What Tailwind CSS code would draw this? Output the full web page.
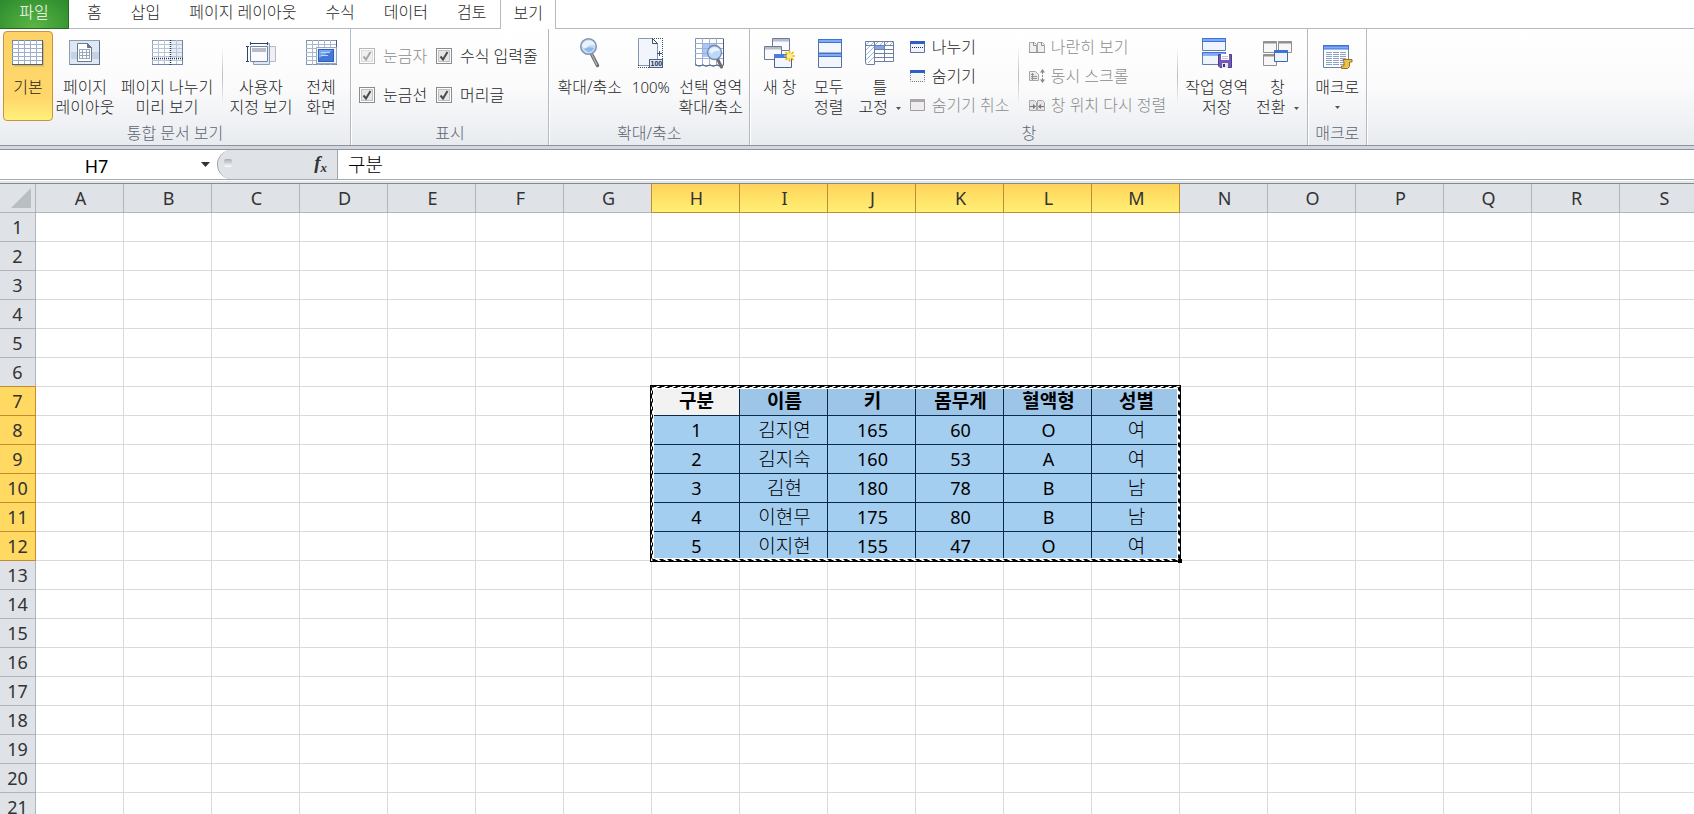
<!DOCTYPE html>
<html lang="ko">
<head>
    <meta charset="UTF-8">
    <meta name="viewport" content="width=device-width, initial-scale=1.0">
    <title>통합 문서</title>
    <script src="https://cdn.jsdelivr.net/npm/@tailwindcss/browser@4"></script>
</head>
<body class="h-screen overflow-hidden flex flex-col bg-white text-base text-[#1f1f1f] font-light font-[family-name:'Noto_Sans','Noto_Sans_CJK_KR',sans-serif]">

    <!-- Ribbon tabs -->
    <nav class="flex shrink-0 h-[29px] leading-6 whitespace-nowrap">
        <button class="w-[69px] pb-1 text-white border-b border-r border-[#1f6b22] bg-radial-[at_50%_100%] from-[#5cb646] to-[#2b8a2c]">파일</button>
        <div class="w-[3px] border-b border-[#b6babf]"></div>
        <button class="pl-[15px] pr-3.5 pb-1 border-b border-[#b6babf]">홈</button>
        <button class="pl-[15px] pr-3.5 pb-1 border-b border-[#b6babf]">삽입</button>
        <button class="pl-[15px] pr-3.5 pb-1 border-b border-[#b6babf]">페이지 레이아웃</button>
        <button class="pl-[15px] pr-3.5 pb-1 border-b border-[#b6babf]">수식</button>
        <button class="pl-[15px] pr-3.5 pb-1 border-b border-[#b6babf]">데이터</button>
        <button class="pl-[15px] pr-3.5 pb-1 border-b border-[#b6babf]">검토</button>
        <button class="px-3 pb-1 border-x border-[#b6babf]">보기</button>
        <div class="flex-1 border-b border-[#b6babf]"></div>
    </nav>

    <!-- Ribbon -->
    <div class="flex shrink-0 h-[116px] leading-5 whitespace-nowrap bg-linear-to-b from-white via-[#fbfbfc] to-[#e8ebef]">

        <section class="flex flex-col pt-0.5 border-r border-[#b4b8c0]">
            <div class="flex h-[90px] px-[3px]">
                <button class="flex flex-col items-center w-[50px] pt-[5px] border border-[#c39543] rounded-sm bg-linear-to-b from-[#fdd367] via-[#ffd76b] via-75% to-[#fff07c]">
                    <svg class="w-8 h-8 mb-2" viewBox="0 0 32 32">
                        <rect x="1.5" y="4.500" width="31" height="25" fill="#00000022"/>
                        <rect x="0.500" y="3.500" width="30" height="24" fill="#fff" stroke="#6f86ab"/>
                        <path d="M0 7.500H31M0 11.500H31M0 15.500H31M0 19.500H31M0 23.500H31M6.500 3V28M12.500 3V28M18.500 3V28M24.500 3V28" stroke="#9dafc9" fill="none"/>
                        <path d="M30.500 3V27.500H0" stroke="#4b5f7e" fill="none"/>
                    </svg>
                    기본
                </button>
                <button class="flex flex-col items-center w-16 pt-1.5">
                    <svg class="w-8 h-8 mb-2" viewBox="0 0 32 32">
                        <rect x="0.500" y="3.500" width="30" height="24" fill="#dfe7f3" stroke="#8b9db8"/>
                        <path d="M2 15H30V22H2z" fill="#c3d2e4"/>
                        <path d="M30.500 4V27.500H1" stroke="#5c7190" fill="none"/>
                        <path d="M8.500 6.500H18.500L22.500 10.500V24.500H8.500z" fill="#fff" stroke="#6b7b93"/>
                        <path d="M18.500 6.500V10.500H22.500z" fill="#65758d" stroke="#65758d"/>
                        <path d="M10 12.500H21M10 15.500H21M10 18.500H21M10 21.500H21M10.500 12V22M13.500 12V22M17.500 12V22M20.500 12V22" stroke="#9aa7ba" fill="none"/>
                    </svg>
                    <span>페이지<br>레이아웃</span>
                </button>
                <button class="flex flex-col items-center w-[100px] pt-1.5">
                    <svg class="w-8 h-8 mb-2" viewBox="0 0 32 32">
                        <rect x="1.500" y="3.500" width="30" height="24" fill="#fff" stroke="#8fa1bb"/>
                        <path d="M20 4H31V21H20z" fill="#e6ecf6"/>
                        <path d="M1 7.500H32M1 11.500H32M1 15.500H32M1 19.500H32M1 23.500H32M7.500 3V28M13.500 3V28M25.500 3V28" stroke="#bac6d8" fill="none"/>
                        <path d="M31.500 3V27.500H1" stroke="#7085a5" fill="none"/>
                        <path d="M19.500 3V28M1 21.500H32" stroke="#20395e" stroke-dasharray="1 1" stroke-width="1.500" fill="none"/>
                    </svg>
                    <span>페이지 나누기<br>미리 보기</span>
                </button>
                <div class="w-[10px] flex justify-center py-4"><div class="w-px bg-linear-to-b from-transparent via-[#b9bcc2] to-transparent"></div></div>
                <button class="flex flex-col items-center w-[68px] pt-1.5">
                    <svg class="w-8 h-8 mb-2" viewBox="0 0 32 32">
                        <path d="M24 9.500H30.500V24.500H22" fill="#f1eef5" stroke="#b9b7c4"/>
                        <path d="M8.500 24V27.500H24.500V6.500H22" fill="#e2e8f1" stroke="#8c9db5"/>
                        <path d="M5.500 9.500H22.500V24.500H5.500z" fill="#fafbff" stroke="#6d82a5"/>
                        <path d="M7 11H21V15H7z" fill="#b9bcc4"/>
                        <path d="M5 6.500H23M5.500 5V8M22.500 5V8M2.500 9V25M1 9.500H4M1 24.500H4" stroke="#2e4565" fill="none"/>
                    </svg>
                    <span>사용자<br>지정 보기</span>
                </button>
                <button class="flex flex-col items-center w-[52px] pt-1.5">
                    <svg class="w-8 h-8 mb-2" viewBox="0 0 32 32">
                        <rect x="1.500" y="3.500" width="30" height="24" fill="#fff" stroke="#8394ae"/>
                        <path d="M1 7.500H32M1 11.500H32M1 15.500H32M1 19.500H32M1 23.500H32M7.500 3V28M13.500 3V28M19.500 3V28M25.500 3V28" stroke="#a9b8cd" fill="none"/>
                        <path d="M31.500 3V27.500" stroke="#4a5e7d" fill="none"/>
                        <rect x="11.500" y="10.500" width="20" height="16" fill="#eef3fd" stroke="#95a8c8"/>
                        <rect x="13.500" y="12.500" width="15" height="12" fill="#4478d8" stroke="#2e5fb8"/>
                        <path d="M14 13H28L14 21z" fill="#7ba5ee"/>
                        <path d="M16 15.500H25M16 18.500H23" stroke="#bdd3fa"/>
                    </svg>
                    <span>전체<br>화면</span>
                </button>
            </div>
            <h2 class="h-6 leading-6 text-center text-[#5b6373]">통합 문서 보기</h2>
        </section>

        <section class="flex flex-col pt-0.5 border-l border-l-white border-r border-r-[#b4b8c0]">
            <div class="grid grid-cols-[77px_auto] content-start h-[90px] pt-[5px] pl-[7px] pr-[10px]">
                <label class="flex items-center gap-2 h-[39px] text-[#8c8c8c]">
                    <span class="grid w-4 h-4">
                        <input type="checkbox" checked disabled class="[grid-area:1/1] appearance-none w-4 h-4 bg-[#f0f0f0] border border-[#b8b8b8] shadow-[inset_0_0_0_1px_#fff,inset_0_0_0_2px_#dcdcdc]">
                        <svg class="[grid-area:1/1] w-4 h-4 pointer-events-none" viewBox="0 0 16 16"><path d="M4.500 8.500L7 11.500L11.500 4" fill="none" stroke="#a6a6a6" stroke-width="2"/></svg>
                    </span>
                    눈금자
                </label>
                <label class="flex items-center gap-2 h-[39px]">
                    <span class="grid w-4 h-4">
                        <input type="checkbox" checked class="[grid-area:1/1] appearance-none w-4 h-4 bg-[#e6e6e6] border border-[#8b8c8e] shadow-[inset_0_0_0_1px_#fff,inset_0_0_0_2px_#bfc1c4]">
                        <svg class="[grid-area:1/1] w-4 h-4 pointer-events-none" viewBox="0 0 16 16"><path d="M4.500 8.500L7 11.500L11.500 4" fill="none" stroke="#4a4a4a" stroke-width="2"/></svg>
                    </span>
                    수식 입력줄
                </label>
                <label class="flex items-center gap-2 h-[39px]">
                    <span class="grid w-4 h-4">
                        <input type="checkbox" checked class="[grid-area:1/1] appearance-none w-4 h-4 bg-[#e6e6e6] border border-[#8b8c8e] shadow-[inset_0_0_0_1px_#fff,inset_0_0_0_2px_#bfc1c4]">
                        <svg class="[grid-area:1/1] w-4 h-4 pointer-events-none" viewBox="0 0 16 16"><path d="M4.500 8.500L7 11.500L11.500 4" fill="none" stroke="#4a4a4a" stroke-width="2"/></svg>
                    </span>
                    눈금선
                </label>
                <label class="flex items-center gap-2 h-[39px]">
                    <span class="grid w-4 h-4">
                        <input type="checkbox" checked class="[grid-area:1/1] appearance-none w-4 h-4 bg-[#e6e6e6] border border-[#8b8c8e] shadow-[inset_0_0_0_1px_#fff,inset_0_0_0_2px_#bfc1c4]">
                        <svg class="[grid-area:1/1] w-4 h-4 pointer-events-none" viewBox="0 0 16 16"><path d="M4.500 8.500L7 11.500L11.500 4" fill="none" stroke="#4a4a4a" stroke-width="2"/></svg>
                    </span>
                    머리글
                </label>
            </div>
            <h2 class="h-6 leading-6 text-center text-[#5b6373]">표시</h2>
        </section>

        <section class="flex flex-col pt-0.5 border-l border-l-white border-r border-r-[#b4b8c0]">
            <div class="flex h-[90px] pl-[5px] pr-1">
                <button class="flex flex-col items-center w-[70px] pt-1.5">
                    <svg class="w-8 h-8 mb-2" viewBox="0 0 32 32">
                        <path d="M17.500 17L23.500 28.500" stroke="#6b6b70" stroke-width="3.500" stroke-linecap="round"/>
                        <path d="M17.500 17L23 28" stroke="#b5b5ba" stroke-width="1.200"/>
                        <circle cx="14.500" cy="9.500" r="7.800" fill="#c4dcf5" stroke="#8294ae" stroke-width="1.500"/>
                        <path d="M8 9Q9 4 15 3.500Q20 4 21 8Q15 7 12 11Q10 12 8 9z" fill="#eaf4fd"/>
                        <path d="M10 12Q14 9 20 11Q18 15 14 15z" fill="#8cb8e8"/>
                    </svg>
                    확대/축소
                </button>
                <button class="flex flex-col items-center w-[52px] pt-1.5 text-[15px]">
                    <svg class="w-8 h-8 mb-2" viewBox="0 0 32 32">
                        <path d="M3.500 1.500H17.500L22.500 6.500V28.500H3.500z" fill="#f2f6fc" stroke="#8798b3"/>
                        <path d="M17.500 1.500V6.500H22.500z" fill="#fff" stroke="#3e5068"/>
                        <path d="M17 1.500H28M27.500 1V22M3 30.500H15M3.500 28V31" stroke="#3e5068" stroke-dasharray="1 1" fill="none"/>
                        <path d="M22 16.500H27M24.500 14V19" stroke="#3e5068"/>
                        <rect x="14.500" y="22.500" width="13" height="8" fill="#dfe8f5" stroke="#4b6183"/>
                        <text x="15.500" y="29" font-size="7" font-weight="700" fill="#1f2f47" font-family="Liberation Sans">100</text>
                    </svg>
                    100%
                </button>
                <button class="flex flex-col items-center w-[68px] pt-1.5">
                    <svg class="w-8 h-8 mb-2" viewBox="0 0 32 32">
                        <path d="M0.500 1.500H28.500V28.500H0.500z" fill="#fff" stroke="#7f92b0"/>
                        <path d="M8 7H22V20H8z" fill="#a9c7fb"/>
                        <path d="M0 6.500H29M0 11.500H29M0 16.500H29M0 21.500H29M7.500 1V27M14.500 1V27M21.500 1V27" stroke="#9fb1ce" fill="none"/>
                        <path d="M0.500 27Q4 31 8 27.500Q11 31 15 27.500Q18 31 22 27.500Q25 31 28.500 27.500V2" stroke="#4a5f80" fill="none"/>
                        <path d="M22.500 22L26.500 30" stroke="#6b6b70" stroke-width="3" stroke-linecap="round"/>
                        <circle cx="19.500" cy="15.500" r="7" fill="#bcd8f6" stroke="#7489a8" stroke-width="1.300"/>
                        <path d="M14 14Q16 10 20 10Q24 11 25 14Q19 13 17 17z" fill="#e8f3fd"/>
                    </svg>
                    <span>선택 영역<br>확대/축소</span>
                </button>
            </div>
            <h2 class="h-6 leading-6 text-center text-[#5b6373]">확대/축소</h2>
        </section>

        <section class="flex flex-col pt-0.5 border-l border-l-white border-r border-r-[#b4b8c0]">
            <div class="flex h-[90px] pl-1 pr-[3px]">
                <button class="flex flex-col items-center w-[50px] pt-1.5">
                    <svg class="w-8 h-8 mb-2" viewBox="0 0 32 32">
                        <path d="M8.500 1.500H25.500V13.500H8.500z" fill="#fafbff" stroke="#6c7b92"/>
                        <path d="M9 2H25V4.500H9z" fill="#b3bdcc"/>
                        <path d="M0.500 9.500H17.500V22.500H0.500z" fill="#fafbff" stroke="#6c7b92"/>
                        <path d="M1 10H17V12.500H1z" fill="#b3bdcc"/>
                        <path d="M10.500 17.500H27.500V30.500H10.500z" fill="#f2f6fe" stroke="#49638c"/>
                        <path d="M10 17H28V21H10z" fill="#4a7ce0"/>
                        <path d="M25.500 13.500V24.500M20 19H31M21.500 15L29.500 23M29.500 15L21.500 23" stroke="#eeb10f" stroke-width="1.700"/>
                        <circle cx="25.500" cy="19" r="2.800" fill="#fff27d"/>
                    </svg>
                    새 창
                </button>
                <button class="flex flex-col items-center w-12 pt-1.5">
                    <svg class="w-8 h-8 mb-2" viewBox="0 0 32 32">
                        <path d="M5.500 2.500H28.500V16H5.500zM5.500 16.500H28.500V30.500H5.500z" fill="#f3f6fe" stroke="#5a7299"/>
                        <path d="M5 2H29V6H5zM5 16H29V20H5z" fill="#3f72d8"/>
                        <path d="M6 4H28M6 18H28" stroke="#7fabf7" stroke-width="2"/>
                    </svg>
                    <span>모두<br>정렬</span>
                </button>
                <button class="flex flex-col items-center w-[54px] pt-1.5">
                    <svg class="w-8 h-8 mb-2" viewBox="0 0 32 32">
                        <path d="M1.500 4.500H29.500V24.500H10.500V27.500H3Q1.500 27.500 1.500 25z" fill="#fff" stroke="#6e7f9c"/>
                        <path d="M2 8L5 5M2 13L10 5M2 18L10 10M2 23L10 15M4 26L10 20M11 8L14 5M16 8L19 5M21 8L24 5M26 8L29 5" stroke="#9db8e4"/>
                        <path d="M11 9H20V12.500H11z" fill="#7ba6f3"/>
                        <path d="M1 8.500H30M10 12.500H30M10 16.500H30M10 20.500H30M10.500 4V25M20.500 4V25" stroke="#6f819f" fill="none"/>
                    </svg>
                    <span>틀<br>고정 <svg class="inline w-[5px] h-[3px] ml-1" viewBox="0 0 5 3"><path d="M0 0H5L2.500 3z" fill="#555"/></svg></span>
                </button>
                <div class="flex flex-col w-[107px] pt-px pl-[3px]">
                    <button class="flex items-center gap-1.5 h-[29px]">
                        <svg class="w-4 h-4" viewBox="0 0 16 16"><path d="M0.500 2.500H14.500V13.500H0.500z" fill="#f1f4fc" stroke="#5d7499"/><path d="M0 2H15V5H0z" fill="#2e5fc6"/><path d="M2 8.500H14" stroke="#22344f" stroke-dasharray="1 1"/></svg>
                        나누기
                    </button>
                    <button class="flex items-center gap-1.5 h-[29px]">
                        <svg class="w-4 h-4" viewBox="0 0 16 16"><path d="M1 5H14V13H1z" fill="#f3f7f2"/><path d="M0.500 5V13.500H14.500V5" fill="none" stroke="#6f7d8d" stroke-dasharray="1 1"/><path d="M0 2H15V5H0z" fill="#2e5fc6"/></svg>
                        숨기기
                    </button>
                    <button disabled class="flex items-center gap-1.5 h-[29px] text-[#8c8c8c]">
                        <svg class="w-4 h-4" viewBox="0 0 16 16"><path d="M0.500 2.500H14.500V13.500H0.500z" fill="#efecef" stroke="#a09ca0"/><path d="M0 2H15V5H0z" fill="#aaa6aa"/></svg>
                        숨기기 취소
                    </button>
                </div>
                <div class="w-[10px] flex justify-center py-4"><div class="w-px bg-linear-to-b from-transparent via-[#b9bcc2] to-transparent"></div></div>
                <div class="flex flex-col w-[149px] pt-px pl-1 text-[#8c8c8c]">
                    <button disabled class="flex items-center gap-[5px] h-[29px]">
                        <svg class="w-[18px] h-4" viewBox="0 0 18 16"><path d="M1.500 3.500H6.500L8.500 5.500V13.500H1.500zM9.500 3.500H14.500L16.500 5.500V13.500H9.500z" fill="#f1eff1" stroke="#aaa7aa"/><path d="M5.500 3V6.500H8M13.500 3V6.500H16M1 13.500H17" stroke="#929092" fill="none"/></svg>
                        나란히 보기
                    </button>
                    <button disabled class="flex items-center gap-[5px] h-[29px]">
                        <svg class="w-[18px] h-4" viewBox="0 0 18 16"><path d="M1.500 3.500H7.500L10.500 6.500V12.500H1.500z" fill="#ebe9eb" stroke="#aaa7aa"/><path d="M3 6.500H6M3 8.500H9M3 10.500H9M4.500 5V12" stroke="#929092"/><path d="M14.500 4V13" stroke="#888" stroke-dasharray="2 1"/><path d="M12 4.500L14.500 1L17 4.500zM12 11.500L14.500 15L17 11.500z" fill="#888"/></svg>
                        동시 스크롤
                    </button>
                    <button disabled class="flex items-center gap-[5px] h-[29px]">
                        <svg class="w-[18px] h-4" viewBox="0 0 18 16"><path d="M1.500 3.500H6.500L8.500 5.500V13.500H1.500zM9.500 3.500H14.500L16.500 5.500V13.500H9.500z" fill="#e5e3e5" stroke="#aaa7aa"/><path d="M2 9.500H6M12 9.500H16" stroke="#777"/><path d="M5 7L8 9.500L5 12zM13 7L10 9.500L13 12z" fill="#777"/></svg>
                        창 위치 다시 정렬
                    </button>
                </div>
                <div class="w-[10px] flex justify-center py-4"><div class="w-px bg-linear-to-b from-transparent via-[#b9bcc2] to-transparent"></div></div>
                <button class="flex flex-col items-center w-[68px] pt-1.5">
                    <svg class="w-8 h-8 mb-2" viewBox="0 0 32 32">
                        <path d="M1.500 1.500H24.500V13.500H1.500zM1.500 15.500H24.500V27.500H1.500z" fill="#edf4fe" stroke="#5f7da9"/>
                        <path d="M1 1H25V5H1zM1 15H25V18.500H1z" fill="#3f72d8"/>
                        <path d="M2 3H24M2 17H24" stroke="#7fabf7" stroke-width="2"/>
                        <path d="M17.500 17.500H30.500V30.500H19L17.500 29z" fill="#7259b4" stroke="#503c8c"/>
                        <path d="M20 17H28V23H20z" fill="#fff"/>
                        <path d="M21 19.500H27M21 21.500H27" stroke="#c3c3cf"/>
                        <path d="M21 26H27V31H21z" fill="#e6e3f2"/><path d="M22 27H24V30H22z" fill="#3f3070"/>
                    </svg>
                    <span>작업 영역<br>저장</span>
                </button>
                <button class="flex flex-col items-center w-[53px] pt-1.5">
                    <svg class="w-8 h-8 mb-2" viewBox="0 0 32 32">
                        <path d="M2.500 4.500H15.500V15.500H2.500zM17.500 4.500H30.500V15.500H17.500zM2.500 17.500H15.500V28.500H2.500z" fill="#f7f7f9" stroke="#919191"/>
                        <path d="M2 5.500H16M17 5.500H31M2 18.500H16" stroke="#919191" stroke-width="2"/>
                        <path d="M13.500 13.500H26.500V24.500H13.500z" fill="#edf4fe" stroke="#4668a0"/>
                        <path d="M13 13H27V16H13z" fill="#3f72d8"/>
                    </svg>
                    <span>창<br>전환 <svg class="inline w-[5px] h-[3px] ml-1" viewBox="0 0 5 3"><path d="M0 0H5L2.500 3z" fill="#555"/></svg></span>
                </button>
            </div>
            <h2 class="h-6 leading-6 text-center text-[#5b6373]">창</h2>
        </section>

        <section class="flex flex-col pt-0.5 border-l border-l-white border-r border-r-[#b4b8c0]">
            <div class="flex h-[90px] px-0.5">
                <button class="flex flex-col items-center w-[53px] pt-1.5">
                    <svg class="w-8 h-8 mb-2" viewBox="0 0 32 32">
                        <path d="M2.500 8.500H27.500V30.500H2.500z" fill="#fff" stroke="#6a83ab"/>
                        <path d="M2 8H28V12.500H2z" fill="#3f72d8"/><path d="M3 10.500H27" stroke="#7fabf7" stroke-width="2"/>
                        <path d="M5 15.500H25M5 17.500H25M5 19.500H25M5 21.500H25M5 23.500H25M5 25.500H25M5 27.500H25" stroke="#8da2c2" stroke-dasharray="6 1"/>
                        <path d="M22 22.500H31V25H28.500V29.500L26.500 31.500H20.500V29H23V25z" fill="#ecc24c" stroke="#97701b"/>
                    </svg>
                    <span>매크로</span>
                    <svg class="w-[5px] h-[3px] mt-[9px]" viewBox="0 0 5 3"><path d="M0 0H5L2.500 3z" fill="#555"/></svg>
                </button>
            </div>
            <h2 class="h-6 leading-6 text-center text-[#5b6373]">매크로</h2>
        </section>
        <div class="w-px bg-white"></div>
    </div>

    <!-- Formula bar -->
    <div class="shrink-0 h-[5px] border-y border-[#8e939b] bg-[#d3d7dd]"></div>
    <div class="flex shrink-0 h-[30px] border-b border-[#a5a9b0] text-black">
        <div class="flex items-center w-[217px]">
            <input type="text" value="H7" aria-label="이름 상자" class="flex-1 min-w-0 pt-0.5 text-center text-lg leading-6 font-normal outline-none">
            <button aria-label="이름 목록" class="w-6 h-6 flex items-center justify-center">
                <svg class="w-[9px] h-[5px]" viewBox="0 0 9 5"><path d="M0 0H9L4.500 5z" fill="#333"/></svg>
            </button>
        </div>
        <div class="flex items-center justify-between w-[121px] pl-1.5 pr-2.5 border-l border-r border-[#a0a5ad] rounded-l-[15px] bg-[#dfe2e7]">
            <div class="w-2 h-2 mb-1 rounded-xs bg-linear-to-b from-[#aaaeb4] to-white"></div>
            <button aria-label="함수 삽입" class="pb-1 font-['Liberation_Serif',serif] italic font-bold text-[19px] leading-6 text-[#333]">f<sub class="text-[13px]">x</sub></button>
        </div>
        <input type="text" value="구분" aria-label="수식 입력줄" class="flex-1 min-w-0 pl-2.5 text-[19px] leading-6 outline-none">
    </div>
    <div class="shrink-0 h-1 border-t border-b border-t-white border-b-[#858a91] bg-[#e3e6ea]"></div>

    <!-- Sheet -->
    <main class="relative flex-1 min-h-0 overflow-hidden">
        <table class="table-fixed w-[1708px] border-separate border-spacing-0 text-lg leading-6 text-center">
            <thead>
                <tr id="columnHeads"></tr>
            </thead>
            <tbody id="sheetRows"></tbody>
        </table>

        <!-- Copy marquee round H7:M12 -->
        <svg class="absolute left-[650px] top-[201px] w-[533px] h-[179px] pointer-events-none" viewBox="0 0 533 179">
            <rect x="0.500" y="0.500" width="530" height="176" fill="none" stroke="#000"/>
            <rect x="2.500" y="2.500" width="526" height="172" fill="none" stroke="#fff" stroke-width="3"/>
            <rect x="1.500" y="1.500" width="528" height="174" fill="none" stroke="#000" stroke-dasharray="5 3"/>
            <rect x="2.500" y="2.500" width="526" height="172" fill="none" stroke="#000" stroke-dasharray="4 4" stroke-dashoffset="3"/>
            <rect x="528" y="174" width="4" height="4" fill="#000"/>
        </svg>
    </main>

    <script>
        const columns = 'ABCDEFGHIJKLMNOPQRS'.split('');
        const firstCol = 7;   // H
        const lastCol = 12;   // M
        const firstRow = 7;
        const lastRow = 12;

        const data = [
            ['구분', '이름', '키', '몸무게', '혈액형', '성별'],
            ['1', '김지연', '165', '60', 'O', '여'],
            ['2', '김지숙', '160', '53', 'A', '여'],
            ['3', '김현', '180', '78', 'B', '남'],
            ['4', '이현무', '175', '80', 'B', '남'],
            ['5', '이지현', '155', '47', 'O', '여']
        ];

        // Column letters
        let heads = '<th class="w-9 h-[29px] p-0 bg-[#dfe2e7] border-r border-b border-[#b1b5ba]"><svg class="ml-[11px] w-5 h-5" viewBox="0 0 20 20"><path d="M20 0V20H0z" fill="#b9bec3"/></svg></th>';
        columns.forEach(function(name, i) {
            let look = 'bg-[#dfe2e7] border-[#b1b5ba]';
            if (i >= firstCol && i <= lastCol) {
                look = 'bg-linear-to-b from-[#ffd35a] to-[#fff074] border-[#c48c2e]';
            } else if (i === firstCol - 1) {
                look = 'bg-[#dfe2e7] border-b-[#b1b5ba] border-r-[#c48c2e]';
            }
            heads += '<th class="w-[88px] h-[29px] pl-0.5 pr-0 py-0 font-normal text-[#333] border-r border-b ' + look + '">' + name + '</th>';
        });
        document.getElementById('columnHeads').innerHTML = heads;

        // Numbered rows with their cells
        let rows = '';
        for (let r = 1; r <= 21; r++) {
            const rowSelected = r >= firstRow && r <= lastRow;
            let look = 'bg-[#dfe2e7] border-[#b1b5ba]';
            if (rowSelected) {
                look = 'bg-[#ffd961] border-[#c48c2e]';
            } else if (r === firstRow - 1) {
                look = 'bg-[#dfe2e7] border-r-[#b1b5ba] border-b-[#c48c2e]';
            }
            rows += '<tr><th class="h-[29px] p-0 font-normal text-[#333] border-r border-b ' + look + '">' + r + '</th>';
            for (let c = 0; c < columns.length; c++) {
                if (rowSelected && c >= firstCol && c <= lastCol) {
                    const text = data[r - firstRow][c - firstCol];
                    let cell = 'bg-[#a4cef0]';
                    let weight = '';
                    if (r === firstRow) {
                        cell = c === firstCol ? 'bg-[#f2f2f2]' : 'bg-[#9cc5e8]';
                        weight = ' font-bold';
                    }
                    // Hangul is set a little larger than digits and Latin letters
                    const size = /[가-힣]/.test(text) ? 'text-[19px] leading-6' : 'text-lg leading-6 font-normal';
                    rows += '<td class="h-[29px] pl-0.5 pr-0 py-0 text-black border-r border-b border-[#0b2a4a] ' + cell + '"><div class="' + size + weight + '">' + text + '</div></td>';
                } else {
                    rows += '<td class="h-[29px] p-0 border-r border-b border-[#d9dadb]"></td>';
                }
            }
            rows += '</tr>';
        }
        document.getElementById('sheetRows').innerHTML = rows;
    </script>

</body>
</html>
